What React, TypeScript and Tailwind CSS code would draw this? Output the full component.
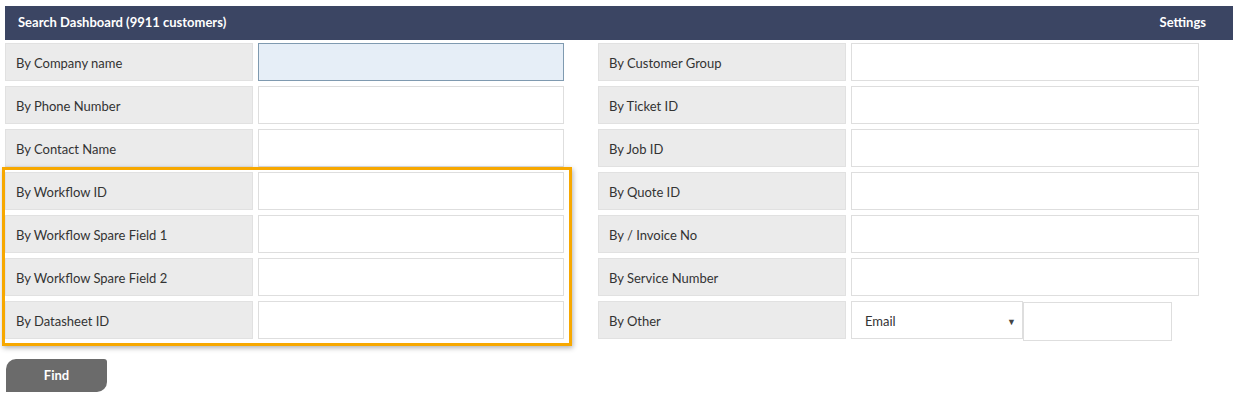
import React from "react";

const left = [
  "By Company name",
  "By Phone Number",
  "By Contact Name",
];

const boxed = [
  "By Workflow ID",
  "By Workflow Spare Field 1",
  "By Workflow Spare Field 2",
  "By Datasheet ID",
];

const right = [
  "By Customer Group",
  "By Ticket ID",
  "By Job ID",
  "By Quote ID",
  "By / Invoice No",
  "By Service Number",
];

function Label({ text }: { text: string }) {
  return (
    <div className="flex h-[38px] w-[248px] shrink-0 items-center border border-[#e1e1e1] bg-[#ebebeb] pl-[10px] pt-[3px] text-[13px] text-[#333]">
      {text}
    </div>
  );
}

function Field({ width, focused }: { width: string; focused?: boolean }) {
  return (
    <div
      className={
        focused
          ? `h-[38px] ${width} border border-[#7f9ab0] bg-[#e6eef7]`
          : `h-[38px] ${width} border border-[#dedede] bg-white`
      }
    />
  );
}

export default function App() {
  return (
    <div className="min-h-screen bg-white pl-[5px] pt-[6px] font-['Lato','Liberation_Sans',sans-serif]">
      <div className="flex h-[34px] w-[1228px] items-center justify-between bg-[#3b4563] pl-[13px] pr-[27px] text-[13px] font-bold text-white">
        <span>Search Dashboard (9911 customers)</span>
        <span>Settings</span>
      </div>

      <div className="mt-[3px] flex gap-[34px]">
        <div className="flex w-[559px] flex-col gap-[5px]">
          {left.map((t, i) => (
            <div key={t} className="flex gap-[5px]">
              <Label text={t} />
              <Field width="w-[306px]" focused={i === 0} />
            </div>
          ))}
          <div className="relative flex flex-col gap-[5px]">
            <div className="pointer-events-none absolute -bottom-[7px] -left-[3px] -right-[8px] -top-[5px] z-10 border-[3px] border-[#f7a800] shadow-[1px_2px_5px_rgba(0,0,0,0.3)]" />
            {boxed.map((t) => (
              <div key={t} className="flex gap-[5px]">
                <Label text={t} />
                <Field width="w-[306px]" />
              </div>
            ))}
          </div>
        </div>

        <div className="flex flex-col gap-[5px]">
          {right.map((t) => (
            <div key={t} className="flex gap-[5px]">
              <Label text={t} />
              <Field width="w-[348px]" />
            </div>
          ))}
          <div className="flex gap-[5px]">
            <Label text="By Other" />
            <div className="flex">
              <div className="flex h-[38px] w-[172px] items-center justify-between border border-[#dedede] bg-white pl-[13px] pr-[6px] pt-[3px] text-[13px] text-[#333]">
                <span>Email</span>
                <span className="text-[9px] text-[#444]">▼</span>
              </div>
              <div className="mt-[1px] h-[39px] w-[149px] border border-[#dedede] bg-white" />
            </div>
          </div>
        </div>
      </div>

      <button className="mt-[18px] ml-[1px] flex h-[33px] w-[101px] items-center justify-center rounded-tl-[10px] rounded-br-[10px] rounded-tr-[3px] bg-[#6b6b6b] text-[13px] font-bold text-white">
        Find
      </button>
    </div>
  );
}
